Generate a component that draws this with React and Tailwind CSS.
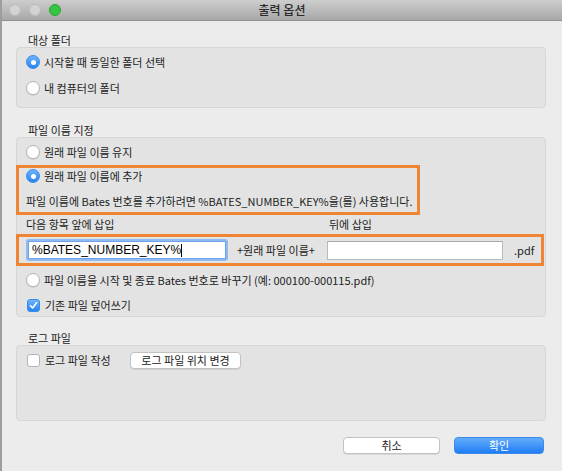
import React from 'react';

const font = { fontFamily: '"Noto Sans CJK KR", "Liberation Sans", sans-serif' };

const Radio = ({ checked }) =>
  checked ? (
    <span className="w-[14px] h-[14px] rounded-full bg-linear-to-b from-[#6cb3fb] to-[#2383f3] border border-[#3b8ce6] flex items-center justify-center shrink-0">
      <span className="w-[5px] h-[5px] rounded-full bg-white" />
    </span>
  ) : (
    <span className="w-[14px] h-[14px] rounded-full bg-white border border-[#b4b4b4] shrink-0 shadow-[0_1px_1px_rgba(0,0,0,0.08)]" />
  );

const Checkbox = ({ checked }) =>
  checked ? (
    <span className="w-[13px] h-[13px] rounded-[3px] bg-linear-to-b from-[#6cb3fb] to-[#2383f3] border border-[#3b8ce6] flex items-center justify-center shrink-0">
      <svg width="9" height="9" viewBox="0 0 9 9">
        <path d="M1.5 4.8 L3.6 7 L7.6 1.8" fill="none" stroke="white" strokeWidth="1.6" strokeLinecap="round" strokeLinejoin="round" />
      </svg>
    </span>
  ) : (
    <span className="w-[13px] h-[13px] rounded-[3px] bg-white border border-[#b4b4b4] shrink-0" />
  );

const Option = ({ kind = 'radio', checked, children, className = '' }) => (
  <div className={`flex items-center h-[16px] ${className}`}>
    {kind === 'radio' ? <Radio checked={checked} /> : <Checkbox checked={checked} />}
    <span className={kind === 'radio' ? 'ml-[4px]' : 'ml-[5px]'}>{children}</span>
  </div>
);

const Label = ({ children, className = '' }) => (
  <div className={`h-[14px] leading-[14px] pl-[12px] ${className}`}>{children}</div>
);

const Group = ({ className = '', children }) => (
  <div className={`box-border border border-[#d6d6d6] bg-[#e3e3e3] rounded-[4px] flex flex-col ${className}`}>
    {children}
  </div>
);

export default function App() {
  return (
    <div
      className="w-[562px] h-[471px] bg-[#ececec] border-l-2 border-[#9d9d9d] flex flex-col text-[11px] text-[#222] overflow-hidden"
      style={font}
    >
      <div className="h-[21px] shrink-0 bg-linear-to-b from-[#cdcdcd] to-[#a8a8a8] border-b border-[#8f8f8f] flex items-center relative">
        <div className="flex items-center gap-[8px] pl-[7px]">
          <span className="w-[12px] h-[12px] rounded-full bg-[#d3d3d3] border border-[#bdbdbd]" />
          <span className="w-[12px] h-[12px] rounded-full bg-[#d3d3d3] border border-[#bdbdbd]" />
          <span className="w-[12px] h-[12px] rounded-full bg-[#34c541] border border-[#2aa533]" />
        </div>
        <div className="absolute inset-0 flex items-center justify-center text-[12px] font-medium text-[#2a2a2a]">
          출력 옵션
        </div>
      </div>

      <div className="pl-[14px] pr-[16px] flex flex-col">
        <Label className="mt-[12px]">대상 폴더</Label>
        <Group className="h-[61px] pt-[6px] pl-[9px]">
          <Option checked>시작할 때 동일한 폴더 선택</Option>
          <Option className="mt-[10px]">내 컴퓨터의 폴더</Option>
        </Group>

        <Label className="mt-[15px]">파일 이름 지정</Label>
        <Group className="h-[180px] pt-[6px]">
          <Option className="pl-[9px]">원래 파일 이름 유지</Option>

          <div className="mt-[5px] ml-[-1px] w-[404px] h-[50px] box-border border-[3px] border-[#ef8534] pl-[7px] flex flex-col">
            <Option checked>원래 파일 이름에 추가</Option>
            <div className="mt-[9px] h-[16px] leading-[16px] whitespace-nowrap">
              파일 이름에 Bates 번호를 추가하려면 %BATES_NUMBER_KEY%을(를) 사용합니다.
            </div>
          </div>

          <div className="mt-[2px] h-[14px] leading-[14px] flex">
            <span className="w-[312px] pl-[9px]">다음 항목 앞에 삽입</span>
            <span>뒤에 삽입</span>
          </div>

          <div className="mt-[3px] ml-[-1px] w-[528px] h-[32px] box-border border-[3px] border-[#ef8534] flex items-center pl-[7px]">
            <div className="w-[202px] h-[22px] rounded-[3px] bg-[#8fbbf2] p-[2px] box-border shrink-0">
              <div
                className="h-full bg-white border border-[#6ea3e8] flex items-center pl-[3px] text-[12px] text-black"
                style={{ fontFamily: '"Liberation Sans", Arial, sans-serif' }}
              >
                %BATES_NUMBER_KEY%<span className="w-px h-[13px] bg-black" />
              </div>
            </div>
            <span className="ml-[9px] w-[90px] shrink-0 whitespace-nowrap">+원래 파일 이름+</span>
            <div className="w-[176px] h-[19px] shrink-0 bg-white border border-[#b9b9b9] border-t-[#a8a8a8]" />
            <span className="ml-[11px]">.pdf</span>
          </div>

          <Option className="mt-[6px] pl-[9px] whitespace-nowrap">
            파일 이름을 시작 및 종료 Bates 번호로 바꾸기 (예: 000100-000115.pdf)
          </Option>
          <Option kind="check" checked className="mt-[9px] pl-[10px]">
            기존 파일 덮어쓰기
          </Option>
        </Group>

        <Label className="mt-[14px]">로그 파일</Label>
        <Group className="h-[76px] pt-[5px] pl-[10px]">
          <div className="flex items-center h-[18px]">
            <Option kind="check" className="w-[103px]">로그 파일 작성</Option>
            <button className="w-[111px] h-[17px] bg-white border border-[#c2c2c2] rounded-[4px] shadow-[0_1px_0_rgba(0,0,0,0.08)] flex items-center justify-center text-[11px] text-[#222]">
              로그 파일 위치 변경
            </button>
          </div>
        </Group>

        <div className="mt-[16px] h-[17px] flex justify-end gap-[14px] pr-[2px]">
          <button className="w-[97px] h-[17px] bg-white border border-[#c2c2c2] rounded-[4px] shadow-[0_1px_0_rgba(0,0,0,0.08)] flex items-center justify-center text-[#222]">
            취소
          </button>
          <button className="w-[90px] h-[17px] bg-linear-to-b from-[#62acfb] to-[#1d7df4] border border-[#3a8ae6] rounded-[4px] flex items-center justify-center text-white">
            확인
          </button>
        </div>
      </div>
    </div>
  );
}
